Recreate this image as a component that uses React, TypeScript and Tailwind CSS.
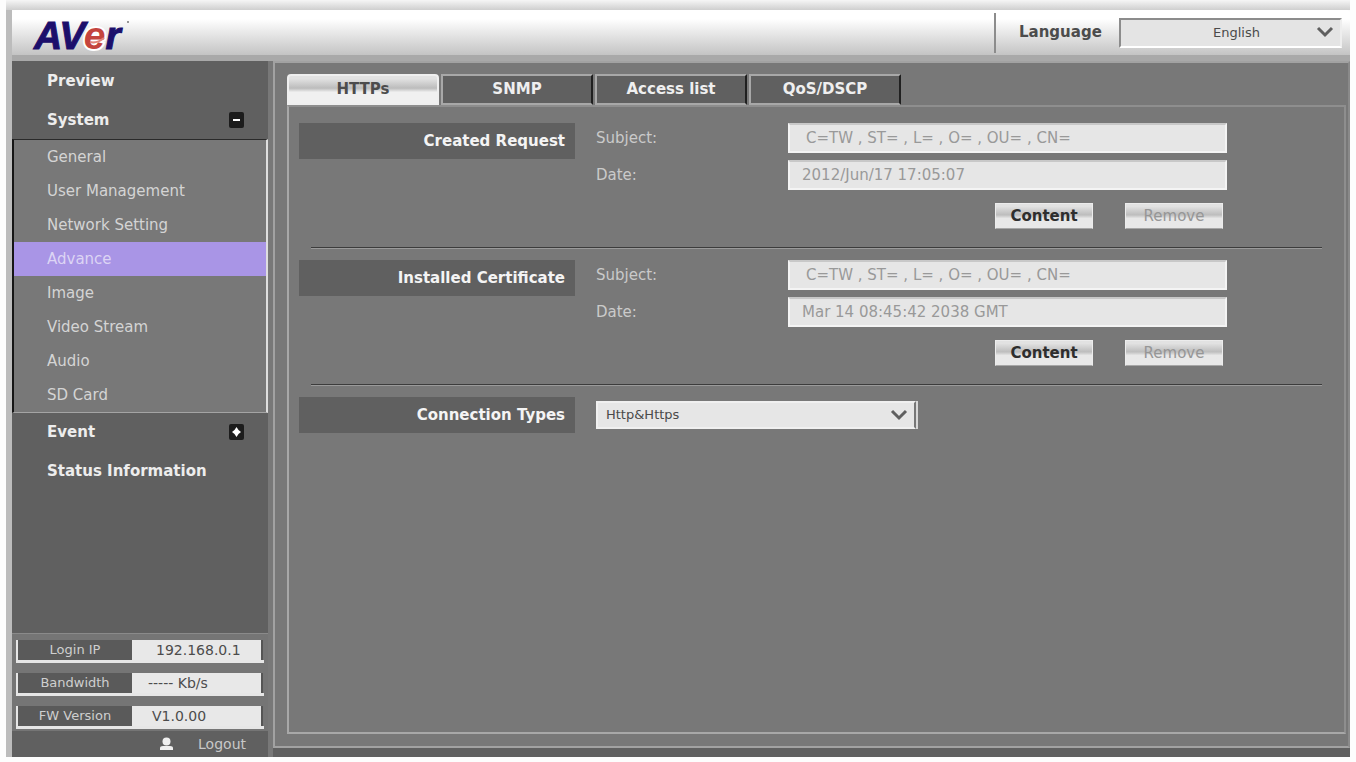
import { useState } from 'react';
import clsx from 'clsx';

const systemItems = ['General', 'User Management', 'Network Setting', 'Advance', 'Image', 'Video Stream', 'Audio', 'SD Card'];

const tabs = ['HTTPs', 'SNMP', 'Access list', 'QoS/DSCP'];

const deviceInfo = [
  { label: 'Login IP', value: '192.168.0.1', className: 'pl-6' },
  { label: 'Bandwidth', value: '----- Kb/s', className: 'pl-4' },
  { label: 'FW Version', value: 'V1.0.00', className: 'pl-5' },
];

function Logo() {
  return (
    <a href="#home" className="relative mt-[6px] inline-block font-['Liberation_Sans',Arial,sans-serif] text-[39px] leading-[45px] font-bold text-[#1c0f6b] italic [-webkit-text-stroke:1px_#1c0f6b]">
      AV<span className="text-[#c4453e] [-webkit-text-stroke:4px_#fff] [paint-order:stroke]">e</span>r
      {/* swirl inside the red e, and the trademark dot */}
      <svg width="96" height="45" viewBox="0 0 96 45" fill="none" className="pointer-events-none absolute top-0 left-0">
        <path d="M56 29c4 1 9 0 14-4" stroke="#e2847b" strokeWidth="2" />
        <circle cx="94" cy="9" r="1" fill="#777" />
      </svg>
    </a>
  );
}

function Chevron({ className }: { className?: string }) {
  return (
    <svg width="18" height="12" viewBox="0 0 18 12" fill="none" stroke="#5f5f5f" strokeWidth="3" className={clsx('pointer-events-none absolute', className)}>
      <path d="M2 2l7 7 7-7" />
    </svg>
  );
}

function ToggleIcon({ open }: { open: boolean }) {
  return (
    <svg width="15" height="16" viewBox="0 0 15 16">
      <rect width="15" height="16" rx="2" fill="#1c1c1c" />
      {open ? <path d="M4 8h7" stroke="#fff" strokeWidth="2" /> : <path d="M7.500 3l2 3 2.500 2-2.500 2-2 3-2-3L3 8l2.500-2z" fill="#fff" />}
    </svg>
  );
}

function SectionTitle({ children }: { children: string }) {
  return (
    <h2 className="flex h-9 w-[276px] shrink-0 items-center justify-end bg-[#606060] pr-[10px] text-[15px] font-bold text-[#f4f4f4]">{children}</h2>
  );
}

function Divider() {
  return <hr className="mx-[22px] mt-[18px] mb-[11px] h-[2px] border-t border-b border-t-[#3c3c3c] border-b-[#9a9a9a]" />;
}

function PanelButton({ children, disabled }: { children: string; disabled?: boolean }) {
  return (
    <button
      type="button"
      disabled={disabled}
      className="h-[26px] w-[98px] border border-[#ececec] border-b-[#a6a6a6] bg-linear-to-b from-[#e2e2e2] from-10% via-[#bdbdbd] via-45% to-[#e8e8e8] to-60% text-[15px] leading-5 font-bold text-[#2e2e2e] disabled:font-normal disabled:text-[#969696]"
    >
      {children}
    </button>
  );
}

interface CertificateProps {
  id: string;
  title: string;
  subject: string;
  date: string;
}

function Certificate({ id, title, subject, date }: CertificateProps) {
  const rows = [
    { name: 'Subject', value: subject, className: 'pl-4' },
    { name: 'Date', value: date, className: 'pl-3' },
  ];

  return (
    <section className="flex pr-[117px] pl-[10px]">
      <SectionTitle>{title}</SectionTitle>
      <div className="ml-[21px] grow">
        <div className="flex flex-col gap-[7px]">
          {rows.map(row => (
            <div key={row.name} className="flex items-center">
              <label htmlFor={`${id}-${row.name}`} className="w-[192px] shrink-0 text-[15px] text-[#cacaca]">{row.name}:</label>
              <input
                id={`${id}-${row.name}`}
                value={row.value}
                disabled
                className={clsx('h-[30px] min-w-0 grow border-2 border-[#f4f4f4] border-t-[#c8c8c8] bg-[#e6e6e6] text-[15px] text-[#999]', row.className)}
              />
            </div>
          ))}
        </div>
        <div className="mt-[13px] flex justify-end gap-8 pr-1">
          <PanelButton>Content</PanelButton>
          <PanelButton disabled>Remove</PanelButton>
        </div>
      </div>
    </section>
  );
}

function Sidebar() {
  return (
    <aside className="flex w-[256px] shrink-0 flex-col bg-[#606060]">
      <nav className="text-[15px] font-bold text-[#ededed]">
        <a href="#preview" className="flex h-10 items-center pl-[35px]">Preview</a>
        <button type="button" aria-expanded="true" className="flex h-[38px] w-full items-center justify-between pr-6 pl-[35px]">
          System
          <ToggleIcon open />
        </button>
        <ul className="border-x-2 border-y border-t-[#2a2a2a] border-r-[#dedede] border-b-[#a4a4a4] border-l-[#161616] bg-[#787878] text-[15px] font-normal">
          {systemItems.map(item => (
            <li key={item}>
              <a
                href={`#${item}`}
                className={clsx('flex h-[34px] items-center pl-[33px]', item === 'Advance' ? 'bg-[#a995e6] text-[#dcd4f4]' : 'text-[#d4d4d4]')}
              >
                {item}
              </a>
            </li>
          ))}
        </ul>
        <button type="button" aria-expanded="false" className="flex h-[38px] w-full items-center justify-between pr-6 pl-[35px]">
          Event
          <ToggleIcon open={false} />
        </button>
        <a href="#status" className="flex h-10 items-center pl-[35px]">Status Information</a>
      </nav>

      <dl className="mt-auto flex flex-col gap-[10px] border-t border-[#8a8a8a] bg-[#757575] px-1 pt-[6px] pb-[2px] text-[13px]">
        {deviceInfo.map(info => (
          <div key={info.label} className="flex h-[23px] border-b-[3px] border-l-2 border-[#e6e6e6]">
            <dt className="flex w-[114px] items-center justify-center bg-[#5a5a5a] text-[#cfcfcf]">{info.label}</dt>
            <dd className={clsx('mr-px flex grow items-center border-r-2 border-[#555] bg-[#e8e8e8] text-[14px] text-[#4c4c4c]', info.className)}>{info.value}</dd>
          </div>
        ))}
      </dl>
      <a href="#logout" className="flex h-[26px] items-center justify-end gap-6 pr-[22px] text-[14px] text-[#c8c8c8]">
        <svg width="15" height="14" viewBox="0 0 15 14" fill="#f0f0f0">
          <circle cx="7.500" cy="4.500" r="4" />
          <path d="M1 13v-2q0-2 3-2h7q3 0 3 2v2z" />
        </svg>
        Logout
      </a>
    </aside>
  );
}

export default function App() {
  const [activeTab, setActiveTab] = useState('HTTPs');

  return (
    <div className="flex min-h-screen flex-col bg-[#fdfdfd] px-[6px] pb-[5px] font-['DejaVu_Sans',Verdana,sans-serif]">
      <div className="h-[10px] bg-linear-to-b from-[#f6f6f6] to-[#cfcfcf]" />
      <div className="flex grow flex-col border-l-[6px] border-[#bcbcbc]">
        <header className="flex h-[51px] items-center rounded-t-sm border-b-[6px] border-[#a9a9a9] bg-linear-to-b from-white from-20% to-[#c4c4c4]">
          <div className="ml-[22px] grow">
            <Logo />
          </div>
          <div className="flex h-10 items-center border-l-2 border-[#8c8c8c] pl-[23px]">
            <label htmlFor="language" className="w-[100px] text-[15px] font-bold text-[#4c4c4c]">Language</label>
            <div className="relative mr-2">
              <select id="language" className="h-[30px] w-[223px] appearance-none border-2 border-t-[#8c8c8c] border-r-[#eee] border-b-white border-l-[#8c8c8c] bg-[#e4e4e4] pl-3 text-center text-[13px] text-[#4a4a4a]">
                <option>English</option>
              </select>
              <Chevron className="top-2 right-2" />
            </div>
          </div>
        </header>

        <div className="flex grow">
          <Sidebar />
          <div className="ml-[5px] flex min-w-0 grow flex-col border-b-[9px] border-[#606060] bg-[#787878] shadow-[-5px_0_0_#787878]">
            <main className="flex grow flex-col border-2 border-[#a2a2a2] border-r-[#8a8a8a] pt-[11px] pr-[2px] pb-3 pl-3">
              <div role="tablist" className="flex gap-[2px]">
                {tabs.map(tab => (
                  <button
                    key={tab}
                    type="button"
                    role="tab"
                    aria-selected={tab === activeTab}
                    onClick={() => setActiveTab(tab)}
                    className={clsx(
                      'h-[31px] w-[152px] border-2 text-[15px] font-bold',
                      tab === activeTab
                        ? 'rounded-t-sm border-[#efefef] bg-linear-to-b from-[#e2e2e2] from-10% via-[#bcbcbc] via-45% to-[#f0f0f0] to-60% text-[#4c4c4c]'
                        : 'border-t-[#a8a8a8] border-r-[#202020] border-b-[#a8a8a8] border-l-[#a8a8a8] bg-[#606060] text-[#efefef]'
                    )}
                  >
                    {tab}
                  </button>
                ))}
              </div>

              <div className="grow border-2 border-t-[#8e8e8e] border-r-[#8e8e8e] border-b-[#a8a8a8] border-l-[#a8a8a8] pt-4">
                <Certificate id="request" title="Created Request" subject="C=TW , ST= , L= , O= , OU= , CN=" date="2012/Jun/17 17:05:07" />
                <Divider />
                <Certificate id="installed" title="Installed Certificate" subject="C=TW , ST= , L= , O= , OU= , CN=" date="Mar 14 08:45:42 2038 GMT" />
                <Divider />
                <section className="flex items-center pl-[10px]">
                  <SectionTitle>Connection Types</SectionTitle>
                  <div className="relative ml-[21px] border-r-2 border-[#d8d8d8]">
                    <select aria-label="Connection Types" className="h-7 w-[320px] appearance-none border-2 border-[#f0f0f0] border-r-[#777] bg-[#e6e6e6] pl-2 text-[13px] text-[#4a4a4a]">
                      <option>Http&amp;Https</option>
                      <option>Https</option>
                    </select>
                    <Chevron className="top-2 right-2" />
                  </div>
                </section>
              </div>
            </main>
          </div>
        </div>
      </div>
    </div>
  );
}
